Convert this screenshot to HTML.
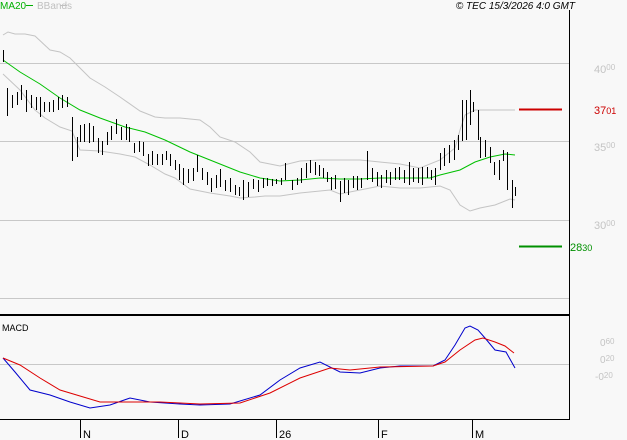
<!DOCTYPE html>
<html><head><meta charset="utf-8"><style>
html,body{margin:0;padding:0;background:#f8f8f8;}
svg{display:block;font-family:"Liberation Sans",sans-serif;}
</style></head><body>
<svg width="627" height="440" viewBox="0 0 627 440" xmlns="http://www.w3.org/2000/svg">
<rect width="627" height="440" fill="#f8f8f8"/>
<g stroke="#c8c8c8" stroke-width="1" fill="none" shape-rendering="crispEdges">
<line x1="0" y1="63.5" x2="569" y2="63.5"/>
<line x1="0" y1="141.5" x2="569" y2="141.5"/>
<line x1="0" y1="220.5" x2="569" y2="220.5"/>
<line x1="0" y1="298.5" x2="569" y2="298.5"/>
<line x1="0" y1="364.5" x2="569" y2="364.5"/>
</g>
<g stroke="#000" fill="none" shape-rendering="crispEdges">
<line x1="569.5" y1="10" x2="569.5" y2="419"/>
<line x1="0" y1="315" x2="570" y2="315" stroke-width="2"/>
<line x1="0" y1="419.5" x2="570" y2="419.5"/>
<path d="M80.5 419V438M178.5 419V438M276.5 419V438M378.5 419V438M472.5 419V438"/>
</g>
<text x="0" y="9" font-size="10" fill="#00b000">MA20</text>
<line x1="26" y1="5.5" x2="33" y2="5.5" stroke="#00b000"/>
<text x="37" y="9" font-size="10" fill="#c0c0c0">BBands</text>
<line x1="60" y1="5.5" x2="67" y2="5.5" stroke="#c0c0c0"/>
<text x="575" y="9" font-size="10" font-style="italic" fill="#000" text-anchor="end">© TEC 15/3/2026 4:0 GMT</text>
<g fill="none" stroke="#c4c4c4" stroke-width="1">
<polyline points="3,35 8,32 15,34 25,34 35,36 50,50 60,52 70,58 80,68 90,78 105,87 120,97 140,111 155,117 165,118 180,118 200,120 210,127 220,137 235,142 250,152 260,162 280,166 300,161 320,160 340,160 360,160 380,162 400,164 420,168 440,160 455,148 460,130 465,115 475,110 490,110 515,110"/>
<polyline points="3,74 20,90 35,110 45,118 60,127 72,131 80,150 100,151 120,154 135,157 150,165 165,174 175,178 190,189 210,193 230,196 240,198 255,197 265,196 280,196 300,193 330,190 340,194 360,190 380,186 400,188 420,188 440,186 450,190 460,205 470,211 480,208 495,205 510,199 515,200"/>
</g>
<polyline fill="none" stroke="#00c000" stroke-width="1" points="3,60 20,72 40,84 60,98 80,110 100,118 125,127 145,132 165,140 190,152 215,162 240,172 260,178 280,181 300,180 320,178 340,179 360,179 380,178 400,178 430,178 440,175 460,170 475,162 490,157 505,154 515,155"/>
<path stroke="#000" stroke-width="1" fill="none" shape-rendering="crispEdges" d="M3.5 50V62M7.5 88V116M12.5 95V108M17.5 92V105M21.5 85V100M26.5 90V112M31.5 95V108M36.5 97V110M40.5 97V117M44.5 102V112M49.5 102V112M53.5 100V112M58.5 97V110M62.5 95V108M67.5 97V107M72.5 117V161M77.5 137V157M80.5 125V142M84.5 124V142M89.5 123V143M93.5 126V142M98.5 138V153M102.5 141V155M107.5 132V145M111.5 126V140M116.5 119V134M121.5 127V140M126.5 124V140M129.5 127V142M134.5 143V153M139.5 141V152M143.5 142V156M148.5 154V166M152.5 151V165M157.5 154V165M162.5 154V165M166.5 151V160M170.5 154V166M175.5 160V170M179.5 164V180M183.5 168V185M188.5 169V183M193.5 168V181M197.5 155V172M202.5 168V180M207.5 172V185M211.5 178V192M216.5 175V188M220.5 169V187M225.5 180V191M230.5 178V192M235.5 185V195M239.5 187V196M243.5 180V200M248.5 182V197M253.5 179V189M258.5 180V192M263.5 178V188M267.5 178V186M272.5 179V186M276.5 179V184M281.5 178V185M285.5 163V180M292.5 180V190M297.5 178V185M301.5 168V183M306.5 163V178M310.5 160V173M315.5 162V175M319.5 165V176M323.5 168V178M327.5 172V182M331.5 177V190M335.5 175V189M340.5 181V202M344.5 178V193M348.5 180V195M353.5 176V188M357.5 176V190M361.5 178V188M367.5 151V180M372.5 168V182M377.5 172V186M381.5 175V188M386.5 170V183M390.5 172V185M395.5 168V180M399.5 167V180M404.5 170V183M409.5 162V185M413.5 168V182M418.5 168V183M422.5 167V185M427.5 167V178M431.5 170V180M435.5 168V185M440.5 153V170M444.5 148V166M449.5 145V163M454.5 140V160M458.5 135V150M462.5 100V141M466.5 100V140M470.5 90V125M473.5 102V112M478.5 110V140M480.5 137V158M485.5 140V157M490.5 147V163M494.5 162V175M499.5 160V180M503.5 150V161M507.5 152V190M512.5 180V208M515.5 187V196"/>
<line x1="519" y1="109.5" x2="562" y2="109.5" stroke="#cc0000" stroke-width="2"/>
<line x1="519" y1="246.5" x2="562" y2="246.5" stroke="#009000" stroke-width="2"/>
<g font-size="11" fill="#c4c4c4">
<text x="594" y="73">40<tspan font-size="8" dy="-3">00</tspan></text>
<text x="594" y="151">35<tspan font-size="8" dy="-3">00</tspan></text>
<text x="594" y="229">30<tspan font-size="8" dy="-3">00</tspan></text>
<text x="600" y="346" font-size="10">0<tspan font-size="8" dy="-2">60</tspan></text>
<text x="600" y="363" font-size="10">0<tspan font-size="8" dy="-2">20</tspan></text>
<text x="595" y="380" font-size="10">-0<tspan font-size="8" dy="-2">20</tspan></text>
</g>
<text x="594" y="114" font-size="11" fill="#cc0000">37<tspan font-size="9">01</tspan></text>
<text x="570" y="251" font-size="11" fill="#009000">28<tspan font-size="9">30</tspan></text>
<text x="2" y="331" font-size="9" fill="#000">MACD</text>
<polyline fill="none" stroke="#0000cc" points="3,358 15,372 30,390 50,395 70,402 90,408 110,405 130,398 150,402 180,404 200,405 230,404 260,395 280,380 300,368 320,362 340,372 360,373 380,368 400,366 433,366 445,360 455,345 465,328 470,326 478,330 485,338 495,350 506,352 515,368"/>
<polyline fill="none" stroke="#dd0000" points="3,358 20,365 40,378 60,390 80,396 100,402 130,402 160,402 200,404 240,403 270,393 300,378 330,368 350,370 380,367 433,366 445,362 460,350 475,340 483,338 495,342 505,346 514,353"/>
<g font-size="11" fill="#000">
<text x="83" y="438">N</text>
<text x="181" y="438">D</text>
<text x="279" y="438">26</text>
<text x="381" y="438">F</text>
<text x="475" y="438">M</text>
</g>
</svg>
</body></html>
